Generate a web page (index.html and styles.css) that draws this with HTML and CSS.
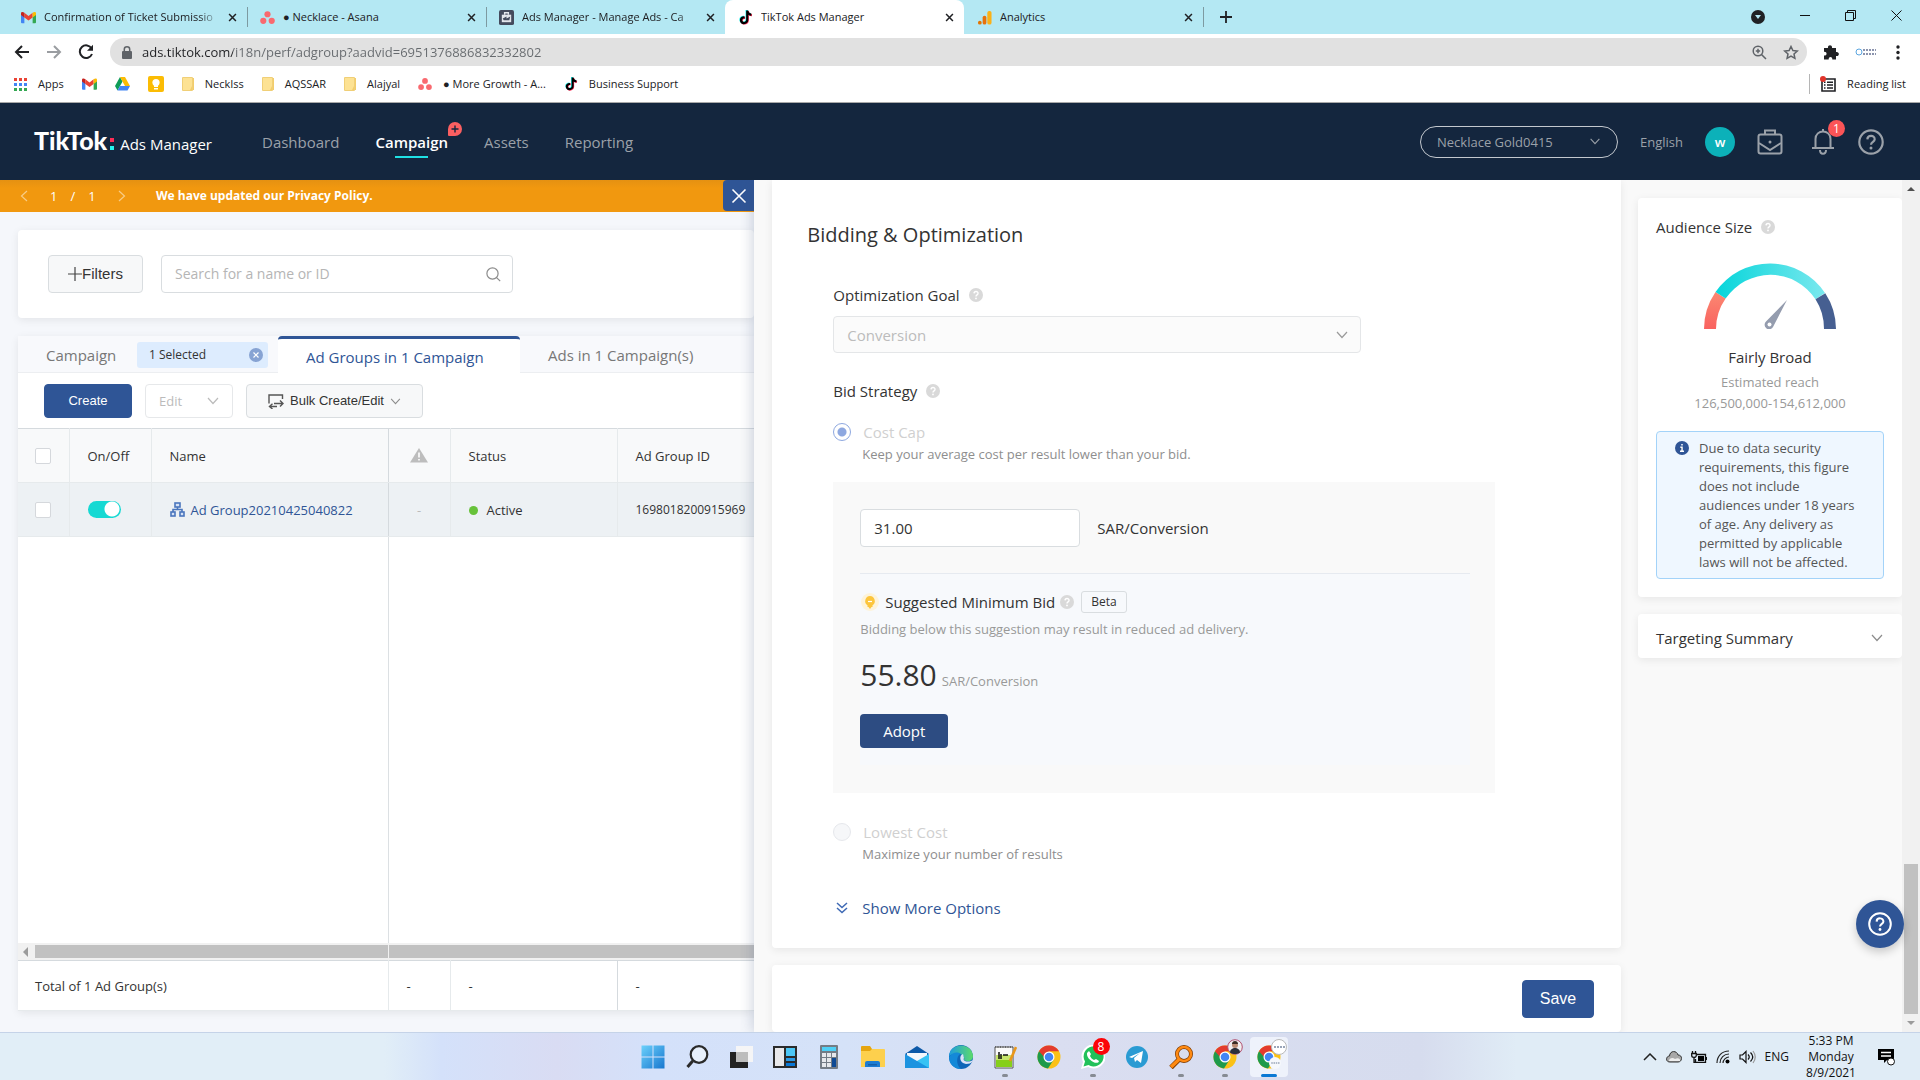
FILE: index.html
```html
<!DOCTYPE html>
<html lang="en">
<head>
  <meta charset="UTF-8">
  <title>TikTok Ads Manager</title>
  <meta name="viewport" content="width=device-width, initial-scale=1.0">
  <link rel="stylesheet" href="styles.css">
</head>
<body>
  <!-- shared icons -->
  <svg class="sprite" width="0" height="0" aria-hidden="true">
    <symbol id="i-gmail" viewBox="0 0 16 12"><path fill="#4285f4" d="M0 1.500V11a1 1 0 0 0 1 1h2.600V5z"/><path fill="#34a853" d="M16 1.500V11a1 1 0 0 1-1 1h-2.600V5z"/><path fill="#ea4335" d="M3.600 1 8 4.500 12.400 1v5L8 9.300 3.600 6z"/><path fill="#c5221f" d="M0 1.500C0 0 2 -.5 3.600 1v5L0 3.300z"/><path fill="#fbbc04" d="M16 1.500C16 0 14-.5 12.400 1v5L16 3.300z"/></symbol>
    <symbol id="i-asana" viewBox="0 0 16 16"><g fill="#f9696f"><circle cx="8" cy="4.500" r="3.300"/><circle cx="3.500" cy="11.500" r="3.300"/><circle cx="12.500" cy="11.500" r="3.300"/></g></symbol>
    <symbol id="i-tiktok" viewBox="0 0 16 16"><path fill="#25f4ee" d="M8 0h2.400c.3 2 1.400 3 3.300 3.300v2.200c-1.300 0-2.300-.4-3.300-1v5.700c0 5.600-8.800 6-9 .2C1.300 7.600 3.600 6 6.300 6.200v2.400C4.700 8.300 3.700 9.200 3.800 10.500c.2 2.400 4.200 2.200 4.200-.5z"/><path fill="#fe2c55" d="M9.400 1h2.300c.3 2 1.400 3 3.200 3.300v2.300c-1.300 0-2.300-.4-3.300-1v5.600c0 5.600-8.800 6-9 .2C2.600 8.600 5 7 7.600 7.300v2.300c-1.600-.3-2.600.6-2.500 1.900.2 2.400 4.300 2.200 4.300-.5z"/><path fill="#010101" d="M8.700.5H11c.3 2 1.400 3 3.200 3.300v2.300c-1.300 0-2.300-.4-3.200-1v5.600c0 5.600-8.800 6-9 .2C2 8.100 4.300 6.500 7 6.800v2.300c-1.600-.3-2.600.6-2.500 1.900.2 2.400 4.200 2.200 4.200-.5z"/></symbol>
    <symbol id="i-folder" viewBox="0 0 12 14"><path fill="#fde293" d="M0 1h11v12H0z"/><path fill="#f3cd6b" d="M11 1h1v12H8l2-4V1z"/><path fill="none" stroke="#f0cf77" d="M.5.5h10v13H.5z"/></symbol>
    <symbol id="i-close" viewBox="0 0 10 10"><path fill="none" stroke="currentColor" stroke-width="1.700" d="M1.200 1.200l7.600 7.600M8.800 1.200L1.200 8.800"/></symbol>
    <symbol id="i-down" viewBox="0 0 12 8"><path fill="none" stroke="currentColor" stroke-width="1.200" d="M1 1l5 5.500L11 1"/></symbol>
    <symbol id="i-help" viewBox="0 0 14 14"><circle cx="7" cy="7" r="7" fill="#d9d9d9"/><path fill="none" stroke="#fff" stroke-width="1.400" d="M5 5.400c.1-2.500 4.100-2.400 4 0 0 1.400-2 1.500-2 3"/><circle cx="7" cy="10.400" r=".9" fill="#fff"/></symbol>
    <symbol id="i-ask" viewBox="0 0 24 24"><g fill="none" stroke="currentColor" stroke-width="2"><circle cx="12" cy="12" r="10.800"/><path d="M8.600 9.600c.2-4.400 7-4.200 6.800 0-.1 2.300-3.400 2.300-3.400 5"/></g><circle cx="12" cy="17.500" r="1.400" fill="currentColor"/></symbol>
    <symbol id="i-chrome" viewBox="0 0 24 24"><circle cx="12" cy="12" r="11.500" fill="#fbc116"/><path fill="#e33b2e" d="M2 6.300A11.500 11.500 0 0 1 22 6.300H12L7 15z"/><path fill="#1e9a4b" d="M2 6.200A11.500 11.500 0 0 0 11 23.500l5.600-8.800L8 13z"/><circle cx="12" cy="12" r="5.500" fill="#fff"/><circle cx="12" cy="12" r="4.300" fill="#4285f4"/></symbol>
  </svg>

  <header class="browser">
    <div class="tabstrip">
      <div class="tab"><svg class="fav" aria-hidden="true"><use href="#i-gmail"/></svg><span class="tab-title fade">Confirmation of Ticket Submissio</span><button class="tab-x" aria-label="Close tab"><svg><use href="#i-close"/></svg></button></div>
      <div class="tab sep"><svg class="fav" aria-hidden="true"><use href="#i-asana"/></svg><span class="tab-title">● Necklace - Asana</span><button class="tab-x" aria-label="Close tab"><svg><use href="#i-close"/></svg></button></div>
      <div class="tab sep"><svg class="fav" viewBox="0 0 16 16" aria-hidden="true"><rect width="16" height="16" rx="2" fill="#444b5d"/><path fill="#e4e6ec" d="M3 5h10v8H3z"/><path fill="none" stroke="#e4e6ec" stroke-width="1.500" d="M6 5V3h4v2"/><path fill="#444b5d" d="M4 9l4-2v2l4-2-1 4H5z"/></svg><span class="tab-title fade">Ads Manager - Manage Ads - Ca</span><button class="tab-x" aria-label="Close tab"><svg><use href="#i-close"/></svg></button></div>
      <div class="tab active"><svg class="fav" aria-hidden="true"><use href="#i-tiktok"/></svg><span class="tab-title">TikTok Ads Manager</span><button class="tab-x" aria-label="Close tab"><svg><use href="#i-close"/></svg></button></div>
      <div class="tab"><svg class="fav" viewBox="0 0 16 16" aria-hidden="true"><circle cx="3" cy="13.500" r="2" fill="#e37400"/><rect x="6" y="6" width="4" height="9.500" rx="2" fill="#e8710a"/><rect x="11" y="1" width="4.500" height="14.500" rx="2" fill="#fbb117"/></svg><span class="tab-title">Analytics</span><button class="tab-x" aria-label="Close tab"><svg><use href="#i-close"/></svg></button></div>
      <button class="new-tab sep" aria-label="New tab"><svg viewBox="0 0 12 12"><path stroke="#202124" stroke-width="1.800" d="M6 0v12M0 6h12"/></svg></button>
      <div class="window-buttons">
        <button class="tab-search" aria-label="Tab search"><svg width="14" height="14" viewBox="0 0 14 14"><circle cx="7" cy="7" r="7" fill="#202124"/><path d="M4 5h6l-3 4z" fill="#b4e8f3"/></svg></button>
        <button aria-label="Minimize"><svg width="10" height="10" viewBox="0 0 10 10"><path stroke="#111" d="M0 5.500h10"/></svg></button>
        <button aria-label="Restore"><svg width="11" height="11" viewBox="0 0 11 11"><path fill="none" stroke="#111" d="M.5 2.500h8v8h-8zM2.500 2.500v-2h8v8h-2"/></svg></button>
        <button aria-label="Close window"><svg width="11" height="11" viewBox="0 0 11 11"><path stroke="#111" d="M.5.5l10 10M10.500.5l-10 10"/></svg></button>
      </div>
    </div>

    <div class="toolbar">
      <button aria-label="Back"><svg width="16" height="14" viewBox="0 0 16 14"><path fill="none" stroke="#202124" stroke-width="2" d="M15 7H2M8 1L2 7l6 6"/></svg></button>
      <button aria-label="Forward"><svg width="16" height="14" viewBox="0 0 16 14"><path fill="none" stroke="#9a9da1" stroke-width="2" d="M1 7h13M8 1l6 6-6 6"/></svg></button>
      <button aria-label="Reload"><svg width="16" height="16" viewBox="0 0 16 16"><path fill="none" stroke="#202124" stroke-width="2" d="M13.600 4.500A6.300 6.300 0 1 0 14 10"/><path fill="#202124" d="M15 .8v6H9z"/></svg></button>
      <div class="omnibox">
        <svg width="10" height="13" viewBox="0 0 10 13" aria-hidden="true"><rect y="5" width="10" height="8" rx="1" fill="#5f6368"/><path fill="none" stroke="#5f6368" stroke-width="1.500" d="M2.300 5V3.300c0-3.400 5.400-3.400 5.400 0V5"/></svg>
        <input class="url" type="text" aria-label="Address" value="ads.tiktok.com/i18n/perf/adgroup?aadvid=6951376886832332802">
        <svg width="15" height="15" viewBox="0 0 15 15" aria-hidden="true"><g fill="none" stroke="#5f6368" stroke-width="1.500"><circle cx="6" cy="6" r="4.800"/><path d="M9.500 9.500L14 14M6 3.800v4.400M3.800 6h4.400"/></g></svg>
        <svg width="16" height="15" viewBox="0 0 16 15" aria-hidden="true"><path fill="none" stroke="#5f6368" stroke-width="1.500" d="M8 1.500l1.900 4 4.400.5-3.300 3 .9 4.400L8 11.200l-3.900 2.200L5 9 1.700 6l4.400-.5z"/></svg>
      </div>
      <svg width="16" height="16" viewBox="0 0 16 16" aria-hidden="true"><path fill="#202124" d="M1 4h4C4.300.2 9.700.2 9 4h4v4c3.800-.7 3.800 4.700 0 4v3.500H9.300c.3-3.300-3.900-3.300-3.600 0H1v-4c3.400.4 3.400-4 0-3.600z"/></svg>
      <svg width="21" height="10" viewBox="0 0 21 10" aria-hidden="true"><circle cx="4" cy="5" r="3" fill="none" stroke="#5ba6e0"/><path stroke="#8b93ad" stroke-width="2" stroke-dasharray="2 1" d="M8 3h13M8 7h13"/></svg>
      <svg class="kebab" width="4" height="15" viewBox="0 0 4 15" aria-hidden="true"><g fill="#202124"><circle cx="2" cy="2" r="1.700"/><circle cx="2" cy="7.500" r="1.700"/><circle cx="2" cy="13" r="1.700"/></g></svg>
    </div>

    <nav class="bookmarks" aria-label="Bookmarks">
      <a href="#"><svg width="13" height="13" viewBox="0 0 13 13"><g stroke-width="3" stroke-dasharray="3 2"><path stroke="#ea4335" d="M0 1.500h13"/><path stroke="#4285f4" d="M0 6.500h13"/><path stroke="#34a853" d="M0 11.500h13"/></g></svg>Apps</a>
      <a href="#" aria-label="Gmail"><svg width="15" height="12"><use href="#i-gmail"/></svg></a>
      <a href="#" aria-label="Drive"><svg width="15" height="14" viewBox="0 0 15 14"><path fill="#0f9d58" d="M5 0L0 9l2.500 4.500L7.500 4.500z"/><path fill="#fbbc04" d="M5 0h5l5 9H10z"/><path fill="#4285f4" d="M5 9h10l-2.500 4.500h-10z"/></svg></a>
      <a href="#" aria-label="Keep"><svg width="16" height="16" viewBox="0 0 16 16"><rect width="16" height="16" rx="2" fill="#fbbc04"/><circle cx="8" cy="6.500" r="3.600" fill="#fff"/><path fill="#fff" d="M6 9h4v2H6zM6 12h4v1.500H6z"/></svg></a>
      <a href="#"><svg width="12" height="14"><use href="#i-folder"/></svg>NeckIss</a>
      <a href="#"><svg width="12" height="14"><use href="#i-folder"/></svg>AQSSAR</a>
      <a href="#"><svg width="12" height="14"><use href="#i-folder"/></svg>Alajyal</a>
      <a href="#"><svg width="14" height="14"><use href="#i-asana"/></svg>● More Growth - A...</a>
      <a href="#"><svg width="14" height="14"><use href="#i-tiktok"/></svg>Business Support</a>
      <a class="reading" href="#"><svg width="16" height="16" viewBox="0 0 16 16"><path fill="none" stroke="#202124" stroke-width="1.600" d="M2 3h13v12H2z"/><path stroke="#202124" stroke-width="1.400" d="M4 6.200h1.500M4 9h1.500M4 12h1.500M7 6.200h6M7 9h6M7 12h6"/><circle cx="3" cy="3" r="3" fill="#e0342b"/></svg>Reading list</a>
    </nav>
  </header>

  <header class="topnav">
    <a class="logo" href="#"><b>TikTok</b><span class="logo-dots"></span><span>Ads Manager</span></a>
    <nav class="menu" aria-label="Main">
      <a href="#">Dashboard</a>
      <a class="current" href="#">Campaign<svg class="plus-badge" width="14" height="14" viewBox="0 0 14 14" aria-hidden="true"><path fill="#fb5f61" d="M7 0a7 7 0 1 1 0 14H1a1 1 0 0 1-1-1V7a7 7 0 0 1 7-7z"/><path stroke="#14263e" stroke-width="1.400" d="M7 3.500v7M3.500 7h7"/></svg></a>
      <a href="#">Assets</a>
      <a href="#">Reporting</a>
    </nav>
    <div class="account">
      <div class="pick pill">
        <select aria-label="Account"><option>Necklace Gold0415</option></select>
        <svg width="12" height="7"><use href="#i-down"/></svg>
      </div>
      <a href="#">English</a>
      <span class="avatar">w</span>
      <button aria-label="Business center"><svg width="26" height="26" viewBox="0 0 26 26"><g fill="none" stroke="#9ba1a9" stroke-width="2"><rect x="1.500" y="5.500" width="23" height="19" rx="2"/><path d="M8 5V1.500h10V5M2 14l11 7 11-7"/></g><circle cx="13" cy="13" r="1.500" fill="#9ba1a9"/></svg></button>
      <button class="bell" aria-label="Notifications"><svg width="22" height="26" viewBox="0 0 22 26"><g fill="none" stroke="#9ba1a9" stroke-width="2"><path d="M3.500 18.500V10c0-10 15-10 15 0v8.500M0 19h22M8 21c0 5 6 5 6 0M11 0v3"/></g></svg><span class="count">1</span></button>
      <button aria-label="Help"><svg width="26" height="26"><use href="#i-ask"/></svg></button>
    </div>
  </header>

  <div class="page">
    <main class="left">
      <div class="notice">
        <button aria-label="Previous notice"><svg width="8" height="12" viewBox="0 0 8 12"><path fill="none" stroke="#f8cc86" stroke-width="1.200" d="M7 1L1.500 6 7 11"/></svg></button>
        <span class="pager"><span>1</span><span>/</span><span>1</span></span>
        <button aria-label="Next notice"><svg width="8" height="12" viewBox="0 0 8 12"><path fill="none" stroke="#f8cc86" stroke-width="1.200" d="M1 1l5.500 5L1 11"/></svg></button>
        <b>We have updated our Privacy Policy.</b>
        <button class="drawer-close" aria-label="Close panel"><svg width="16" height="16" viewBox="0 0 16 16"><path stroke="#fff" stroke-width="1.600" d="M1.500 1.500l13 13M14.500 1.500l-13 13"/></svg></button>
      </div>

      <section class="card filters">
        <button class="btn filter-btn"><svg width="14" height="14" viewBox="0 0 14 14"><path stroke="#444" stroke-width="1.200" d="M7 0v14M0 7h14"/></svg>Filters</button>
        <div class="search">
          <input type="text" aria-label="Search" placeholder="Search for a name or ID">
          <svg width="15" height="15" viewBox="0 0 15 15" aria-hidden="true"><g fill="none" stroke="#8c8c8c" stroke-width="1.200"><circle cx="6.500" cy="6.500" r="5.600"/><path d="M10.600 10.600l3.600 3.600"/></g></svg>
        </div>
      </section>

      <section class="card groups">
        <div class="levels">
          <div class="level first"><a href="#">Campaign</a><span class="chip">1 Selected<button aria-label="Clear selection"><svg viewBox="0 0 14 14" width="14" height="14"><circle cx="7" cy="7" r="7" fill="#87a3d3"/><path stroke="#fff" stroke-width="1.200" d="M4.500 4.500l5 5M9.500 4.500l-5 5"/></svg></button></span></div>
          <div class="level open"><a href="#">Ad Groups in 1 Campaign</a></div>
          <div class="level last"><a href="#">Ads in 1 Campaign(s)</a></div>
        </div>
        <div class="actions">
          <button class="btn primary create">Create</button>
          <button class="btn edit" disabled>Edit<svg width="14" height="8"><use href="#i-down"/></svg></button>
          <button class="btn bulk"><svg width="16" height="15" viewBox="0 0 16 15"><path fill="none" stroke="#555" stroke-width="1.400" d="M1 9.500V1h13.500v4M6 9.500h9M12 6.500l3 3-3 3M9 12.500H2M4.500 9.800l-3 2.700 3 2.500"/></svg>Bulk Create/Edit<svg width="11" height="7"><use href="#i-down"/></svg></button>
        </div>
        <table class="grid">
          <colgroup><col class="c-check"><col class="c-onoff"><col class="c-name"><col class="c-warn"><col class="c-status"><col></colgroup>
          <thead>
            <tr>
              <th><input class="check" type="checkbox" aria-label="Select all"></th>
              <th>On/Off</th>
              <th>Name</th>
              <th class="mid"><svg width="18" height="15" viewBox="0 0 18 15" role="img" aria-label="Warnings"><path fill="#bdbdbd" d="M9 0l9 14.500H0z" stroke-linejoin="round"/><path stroke="#fff" stroke-width="1.600" d="M9 4.500v5M9 11v1.600"/></svg></th>
              <th>Status</th>
              <th>Ad Group ID</th>
            </tr>
          </thead>
          <tbody>
            <tr>
              <td><input class="check" type="checkbox" aria-label="Select ad group"></td>
              <td><input class="switch" type="checkbox" aria-label="Ad group on or off" checked></td>
              <td><a class="group-link" href="#"><svg width="15" height="15" viewBox="0 0 15 15"><g fill="#d6e2f5" stroke="#4a76bd" stroke-width="1.600"><rect x="5" y="1" width="5" height="4"/><rect x="1" y="10" width="4" height="4"/><rect x="10" y="10" width="4" height="4"/></g><path fill="none" stroke="#4a76bd" stroke-width="1.600" d="M7.500 5v3M3 10V7.500h9V10"/></svg>Ad Group20210425040822</a></td>
              <td class="mid faint">-</td>
              <td><span class="dot"></span>Active</td>
              <td class="id">1698018200915969</td>
            </tr>
          </tbody>
        </table>
        <div class="rest"></div>
        <div class="hscroll"><svg width="6" height="10" viewBox="0 0 6 10" aria-hidden="true"><path fill="#9b9b9b" d="M5 0v10L0 5z"/></svg><div class="hthumb"></div></div>
        <table class="grid totals">
          <colgroup><col class="c-fixed"><col class="c-warn"><col class="c-status"><col></colgroup>
          <tbody><tr><td>Total of 1 Ad Group(s)</td><td>-</td><td>-</td><td>-</td></tr></tbody>
        </table>
      </section>
    </main>

    <div class="drawer">
      <div class="form">
        <section class="card bidding">
          <h2>Bidding &amp; Optimization</h2>
          <div class="field">
            <div class="label"><label for="goal">Optimization Goal</label><svg width="14" height="14"><use href="#i-help"/></svg></div>
            <div class="pick box">
              <select id="goal" disabled><option>Conversion</option></select>
              <svg width="14" height="8"><use href="#i-down"/></svg>
            </div>
            <div class="label strategy"><span>Bid Strategy</span><svg width="14" height="14"><use href="#i-help"/></svg></div>
            <div class="option"><input type="radio" name="strategy" id="cap" checked disabled><label for="cap">Cost Cap</label></div>
            <p class="hint">Keep your average cost per result lower than your bid.</p>
            <div class="bidbox">
              <div class="bid"><input type="text" id="bid" value="31.00"><label for="bid">SAR/Conversion</label></div>
              <div class="suggest">
                <div class="suggest-title"><svg width="20" height="20" viewBox="0 0 20 20" aria-hidden="true"><circle cx="10" cy="10" r="9" fill="#fdf3da"/><path fill="#fcc53c" d="M10 4a5 5 0 0 1 2.500 9.200V15h-1l-1.500 2-1.500-2h-1v-1.800A5 5 0 0 1 10 4z"/><path stroke="#fff" stroke-width="1.200" d="M8 9.500h4"/></svg>Suggested Minimum Bid<svg width="14" height="14"><use href="#i-help"/></svg><span class="beta">Beta</span></div>
                <p>Bidding below this suggestion may result in reduced ad delivery.</p>
                <div class="price"><strong>55.80</strong><span>SAR/Conversion</span></div>
                <button class="btn adopt">Adopt</button>
              </div>
            </div>
            <div class="option lowest"><input type="radio" name="strategy" id="low" disabled><label for="low">Lowest Cost</label></div>
            <p class="hint">Maximize your number of results</p>
            <a class="more" href="#"><svg width="12" height="12" viewBox="0 0 12 12"><path fill="none" stroke="#3f6ab5" stroke-width="1.500" d="M1 1l5 4.500L11 1M1 6l5 4.500L11 6"/></svg>Show More Options</a>
          </div>
        </section>
        <div class="card savebar"><button class="btn primary save">Save</button></div>
      </div>

      <aside class="side">
        <section class="card audience">
          <h3>Audience Size<svg width="14" height="14"><use href="#i-help"/></svg></h3>
          <svg class="gauge" width="132" height="66" viewBox="0 0 132 66" role="img" aria-label="Audience gauge">
            <defs>
              <linearGradient id="teal"><stop offset="0" stop-color="#05d5da"/><stop offset="1" stop-color="#7ae8ee"/></linearGradient>
              <linearGradient id="coral" x2="0" y2="1"><stop offset="0" stop-color="#fb8872"/><stop offset="1" stop-color="#f9625f"/></linearGradient>
            </defs>
            <path fill="url(#coral)" d="M0 66A66 66 0 0 1 11.500 29L21.600 35.600A54 54 0 0 0 12 66z"/>
            <path fill="url(#teal)" d="M11.500 29A66 66 0 0 1 121 30.100L111.500 36.300A54 54 0 0 0 21.600 35.600z"/>
            <path fill="#465f91" d="M121.300 30.300A66 66 0 0 1 132 66H120A54 54 0 0 0 111.500 36.300z"/>
            <path fill="#949cae" d="M83 37l-14 27a4.500 4.500 0 1 1-7-5.500z"/><circle cx="65.500" cy="61.500" r="2" fill="#fff"/>
          </svg>
          <p class="size">Fairly Broad</p>
          <p class="reach">Estimated reach</p>
          <p class="reach">126,500,000-154,612,000</p>
          <div class="info"><svg width="14" height="14" viewBox="0 0 14 14" aria-hidden="true"><circle cx="7" cy="7" r="7" fill="#2f5596"/><path stroke="#fff" stroke-width="1.500" d="M7 3v1.600M5.300 6.200H7V10M5 10.300h4"/></svg><p>Due to data security requirements, this figure does not include audiences under 18 years of age. Any delivery as permitted by applicable laws will not be affected.</p></div>
        </section>
        <button class="card targeting">Targeting Summary<svg width="14" height="8"><use href="#i-down"/></svg></button>
      </aside>
      <div class="vscroll" aria-hidden="true"><span class="up"></span><div class="vthumb"></div><span class="down"></span></div>
      <button class="float-help" aria-label="Get help"><svg width="24" height="24"><use href="#i-ask"/></svg></button>
    </div>
  </div>

  <footer class="taskbar">
    <div class="apps">
      <button aria-label="Start"><svg viewBox="0 0 24 24"><defs><linearGradient id="win" x2="1" y2="1"><stop offset="0" stop-color="#6bd0fb"/><stop offset="1" stop-color="#1877cf"/></linearGradient></defs><path fill="url(#win)" d="M.5.500H11.500v11H.5zM12.500.500h11v11h-11zM.5 12.500h11v11H.5zM12.500 12.500h11v11h-11z"/></svg></button>
      <button aria-label="Search"><svg viewBox="0 0 24 24"><g fill="none" stroke="#2a2a2a" stroke-width="2.200"><circle cx="14" cy="9.500" r="8.300" fill="#e8f0fb"/><path stroke-width="3" d="M7.700 16L2.500 22"/></g></svg></button>
      <button aria-label="Task view"><svg viewBox="0 0 24 24"><path fill="#232323" d="M1 7h18v16H1z"/><path fill="#f5f5f6" d="M7 1h17v16H7z"/><path fill="#bdbdbd" d="M7 7h12v10H7z"/></svg></button>
      <button aria-label="Widgets"><svg viewBox="0 0 24 24"><path fill="#2b2b2b" d="M0 1h24v22H0z"/><path fill="#e8e8ea" d="M2 3h9v18H2z"/><path fill="#4cc7f6" d="M13 3h9v8h-9z"/><path fill="#2b9be8" d="M13 13h9v3h-9z"/><path fill="#0a78d6" d="M13 18h9v3h-9z"/></svg></button>
      <button aria-label="Calculator"><svg viewBox="0 0 24 24"><rect x="3" width="18" height="24" rx="1" fill="#747c85"/><path fill="#4fd0f7" d="M5 2h14v4H5z"/><path fill="#e6e8eb" d="M5 8h4v4H5zM10 8h4v4h-4zM15 8h4v4h-4zM5 13h4v4H5zM10 13h4v4h-4zM5 18h4v4H5zM10 18h4v4h-4z"/><path fill="#0f4a94" d="M15 13h4v9h-4z"/></svg></button>
      <button aria-label="File Explorer"><svg viewBox="0 0 24 24"><path fill="#e6a50f" d="M0 2a1 1 0 0 1 1-1h8l2 3v3H0z"/><path fill="#fdd04d" d="M0 6h9l2-2h12a1 1 0 0 1 1 1v17H0z"/><path fill="#1c7cd3" d="M4 22v-4a2 2 0 0 1 2-2h11a2 2 0 0 1 2 2v4z"/><path fill="#155fa8" d="M7 19h9v1.500H7z"/></svg></button>
      <button aria-label="Mail"><svg viewBox="0 0 24 24"><path fill="#0c59a8" d="M0 9l12-8 12 8-12 8z"/><path fill="#f4f7fb" d="M2 8h20v4l-10 7L2 12z"/><path fill="#37c3f4" d="M24 9v14H0z"/><path fill="#1b93e0" d="M0 9l24 14H0z"/></svg></button>
      <button aria-label="Edge"><svg viewBox="0 0 24 24"><defs><linearGradient id="edge"><stop offset="0" stop-color="#1d9be0"/><stop offset="1" stop-color="#5ddb6a"/></linearGradient></defs><circle cx="12" cy="12" r="12" fill="#0f66b8"/><path fill="url(#edge)" d="M0 11C1-3 23-3 24 11c0 6-7 6-9 4 2-6-8-9-15-4z"/><path fill="#1489d8" d="M0 12c4-6 10-5 12-3-4 0-6 10 0 15C4 24 0 18 0 12z"/><path fill="#d9e3f5" d="M14 9c-4 1-4 9 3 10 3 0 5-1 6-2l1-2c-5 3-11 1-9-2z"/></svg></button>
      <button class="running" aria-label="Notepad++"><svg viewBox="0 0 24 24"><path fill="#fafafa" stroke="#555" d="M2 2h18v21H2z"/><path fill="#86cf1a" d="M3 14h16v8H3z"/><path fill="#c6e56a" d="M3 10h16v5H3z"/><path stroke="#666" stroke-width="2" stroke-dasharray="1 1.500" d="M2 2h18"/><path stroke="#111" stroke-width="1.500" d="M6 7v7M8 9v5M10 10h5"/><path stroke="#e9971c" stroke-width="2.600" d="M23 2l-6 14"/></svg></button>
      <button aria-label="Chrome"><svg><use href="#i-chrome"/></svg></button>
      <button class="running" aria-label="WhatsApp"><svg viewBox="0 0 24 24"><path fill="#fff" d="M0 24l2-7a12 12 0 1 1 5 5z"/><path fill="#22c15a" d="M2.500 21.500l1.500-5a10 10 0 1 1 3.500 3.500z"/><path fill="#fff" d="M8 6l2 3-1 2c1 2 2 3 4 4l2-1 3 2c-1 5-13-1-12-8z"/></svg><span class="count red">8</span></button>
      <button aria-label="Telegram"><svg viewBox="0 0 24 24"><circle cx="12" cy="12" r="11" fill="#2a9bd3"/><path fill="#fff" d="M4 12l14-6-2 12-4-3-2 2-1-4 6-5-8 5z"/></svg></button>
      <button class="running" aria-label="Everything"><svg viewBox="0 0 24 24"><g fill="none"><circle cx="15" cy="9" r="7" stroke="#7d3a00" stroke-width="4"/><path stroke="#7d3a00" stroke-width="5" d="M10.500 14L2 22.500"/><circle cx="15" cy="9" r="7" stroke="#ff8a12" stroke-width="2.600"/><path stroke="#ff8a12" stroke-width="3.400" d="M10.500 14L2 22"/></g></svg></button>
      <button class="running" aria-label="Chrome profile 1"><svg><use href="#i-chrome"/></svg><svg class="face" viewBox="0 0 16 16"><circle cx="8" cy="8" r="7.300" fill="#f1eef0" stroke="#b0506f"/><circle cx="8" cy="6" r="3" fill="#b98a72"/><path fill="#2c2f3a" d="M3 13.500c0-6 10-6 10 0-3 2-7 2-10 0z"/><path fill="#3a2a24" d="M5 5c0-4 6-4 6 0z"/></svg></button>
      <button class="running front" aria-label="Chrome profile 2"><svg><use href="#i-chrome"/></svg><svg class="face" viewBox="0 0 16 16"><circle cx="8" cy="8" r="7.500" fill="#fff" stroke="#b9b9b9"/><path stroke="#9aa5b8" stroke-width="2" stroke-dasharray="2 1" d="M3 8h11"/></svg><svg class="face low" viewBox="0 0 16 16"><circle cx="8" cy="8" r="8" fill="#f6f8fc"/><path stroke="#9aa5b8" stroke-width="2" stroke-dasharray="2 1" d="M3 8h11"/></svg></button>
    </div>
    <div class="tray">
      <svg width="14" height="8" viewBox="0 0 14 8"><path fill="none" stroke="#222" stroke-width="1.500" d="M1 7l6-6 6 6"/></svg>
      <svg width="16" height="12" viewBox="0 0 16 12"><path fill="#a8a8a8" stroke="#333" d="M4 11C-1 11 0 5 3.500 5 4-1 11-.5 12 4c5 0 4.500 7 0 7z"/><path fill="#eee" d="M3 10c0-3 4-4 6-2 3-2 6 0 5 2z"/></svg>
      <svg width="16" height="12" viewBox="0 0 16 12"><path fill="none" stroke="#111" stroke-width="1.300" d="M6 3.500h8.500v8H4.500V8M15.500 6v3M1.500 0v2M4.500 0v2M.7 2.500h4.600v2C5.300 7 .7 7 .7 4.500zM3 6v5.500h2"/><path d="M7 5h6v5H7z"/></svg>
      <svg width="14" height="14" viewBox="0 0 14 14"><g fill="none" stroke="#222" stroke-width="1.200"><path d="M1 13C1 6 6 1 13 1M4 13c0-5 4-9 9-9M7 13c0-3 3-6 6-6"/></g><circle cx="11.500" cy="11.500" r="2"/></svg>
      <svg width="17" height="14" viewBox="0 0 17 14"><g fill="none" stroke="#111" stroke-width="1.200"><path d="M1 5h2.500L7 1.500v11L3.500 9H1zM9 4.500c1.500 1.500 1.500 3.500 0 5M11.500 2.500c3 3 3 6 0 9"/><path stroke="#999" d="M14 1c3 4 3 8 0 12"/></g></svg>
      <span>ENG</span>
      <div class="clock">5:33 PM<br>Monday<br>8/9/2021</div>
      <svg class="bubble" width="18" height="18" viewBox="0 0 18 18"><path d="M1 1h16v11h-7l-3 3v-3H1z"/><path stroke="#fff" stroke-width="1.300" d="M4 4.500h10M4 8h10"/><circle cx="14" cy="13.500" r="3.500" fill="#fff" stroke="#111"/></svg>
    </div>
  </footer>
</body>
</html>
```
FILE: styles.css
```css
* {
  box-sizing: border-box;
}
body {
  display: flex;
  flex-direction: column;
  height: 100vh;
  margin: 0;
  overflow: hidden;
  font-family: "Open Sans", "Noto Sans", sans-serif;
  font-size: 13px;
  line-height: 20px;
  color: #333;
  background: #f5f7fb;
}
h2, h3, p {
  margin: 0;
  font-weight: normal;
}
a {
  color: inherit;
  text-decoration: none;
}
button, input, select {
  font: inherit;
  color: inherit;
}
button {
  padding: 0;
  border: none;
  background: none;
  cursor: pointer;
}
svg {
  display: block;
  flex: none;
}
.sprite {
  position: absolute;
}

/* browser window */
.browser {
  flex: none;
  background: #fff;
  border-bottom: 1px solid #a9a9a9;
  font-size: 11px;
  color: #202124;
}
.tabstrip {
  display: flex;
  height: 34px;
  padding-left: 8px;
  background: #b4e8f3;
}
.tab {
  display: flex;
  align-items: center;
  gap: 8px;
  flex: 0 1 239px;
  min-width: 0;
  padding: 0 10px 0 13px;
}
.tab.active {
  background: #fff;
  border-radius: 8px 8px 0 0;
}
.sep {
  background: linear-gradient(#7d9aa1, #7d9aa1) no-repeat left center / 1px 20px;
}
.fav {
  width: 15px;
  height: 15px;
}
.tab-title {
  flex: 1;
  overflow: hidden;
  white-space: nowrap;
}
.fade {
  -webkit-mask-image: linear-gradient(90deg, #000 88%, transparent);
  mask-image: linear-gradient(90deg, #000 88%, transparent);
}
.tab-x svg {
  width: 9px;
  height: 9px;
}
.new-tab {
  padding: 0 17px;
}
.new-tab svg {
  width: 12px;
  height: 12px;
}
.window-buttons {
  display: flex;
  align-items: center;
  gap: 35px;
  margin-left: auto;
  padding: 0 18px 4px 0;
}
.tab-search {
  padding-top: 4px;
}
.toolbar {
  display: flex;
  align-items: center;
  gap: 16px;
  height: 36px;
  padding: 0 20px 0 14px;
}
.omnibox {
  display: flex;
  align-items: center;
  gap: 16px;
  flex: 1;
  height: 28px;
  padding: 0 8px 0 12px;
  border-radius: 14px;
  background: #e1e1e1;
}
.url {
  flex: 1;
  min-width: 0;
  padding: 0;
  margin-left: -6px;
  border: none;
  outline: none;
  font-size: 13px;
  color: transparent;
  background: linear-gradient(90deg, #202124 91px, #666a6e 91px);
  -webkit-background-clip: text;
  background-clip: text;
}
.kebab {
  margin-left: 4px;
}
.bookmarks {
  display: flex;
  align-items: center;
  gap: 18px;
  height: 32px;
  padding: 0 14px 4px;
}
.bookmarks a {
  display: flex;
  align-items: center;
  gap: 11px;
}
.bookmarks .reading {
  margin-left: auto;
  padding-left: 10px;
  border-left: 1px solid #b5b5b5;
}

/* site navigation */
.topnav {
  display: flex;
  align-items: center;
  flex: none;
  height: 77px;
  padding: 0 36px 0 34px;
  background: #14263e;
  font-size: 15px;
  color: #9ba1a9;
}
.logo {
  display: flex;
  align-items: baseline;
  width: 228px;
  color: #fff;
}
.logo b {
  font-family: Lato, sans-serif;
  font-size: 25px;
  font-weight: 900;
}
.logo-dots {
  width: 4px;
  height: 12px;
  margin: 0 6px 0 3px;
  background: linear-gradient(#fe2c55 4px, transparent 4px 8px, #25f4ee 8px);
}
.menu {
  display: flex;
  gap: 36px;
}
.menu .current {
  position: relative;
  font-weight: 600;
  color: #fff;
}
.menu .current::after {
  content: "";
  position: absolute;
  left: 20px;
  top: 24px;
  width: 33px;
  height: 2px;
  background: #1fe0e4;
}
.plus-badge {
  position: absolute;
  left: 100%;
  top: -10px;
}
.account {
  display: flex;
  align-items: center;
  gap: 22px;
  margin-left: auto;
  font-size: 13px;
}
.pick {
  display: grid;
  align-items: center;
}
.pick > * {
  grid-area: 1 / 1;
}
.pick select {
  width: 100%;
  height: 100%;
  appearance: none;
  background: none;
  outline: none;
  opacity: 1;
}
.pick svg {
  justify-self: end;
  margin-right: 12px;
  pointer-events: none;
}
.pill {
  width: 198px;
  height: 32px;
}
.pill select {
  padding: 0 16px;
  border: 1px solid #c3c8ce;
  border-radius: 16px;
}
.pill svg {
  margin-right: 17px;
}
.avatar {
  width: 30px;
  height: 30px;
  border-radius: 50%;
  background: #0cb1b9;
  color: #fff;
  font-weight: 600;
  line-height: 30px;
  text-align: center;
}
.bell {
  position: relative;
  margin: 0 2px 0 7px;
}
.count {
  position: absolute;
  right: -11px;
  top: -9px;
  width: 17px;
  height: 17px;
  border-radius: 50%;
  background: #fb5457;
  color: #fff;
  font-size: 12px;
  line-height: 17px;
  text-align: center;
}

/* page */
.page {
  display: grid;
  grid-template-columns: minmax(0, 11fr) minmax(0, 17fr);
  flex: 1;
  min-height: 0;
}
.left {
  display: flex;
  flex-direction: column;
  min-height: 0;
  overflow: hidden;
}
.card {
  background: #fff;
  border-radius: 4px;
  box-shadow: 0 2px 8px rgba(0, 0, 0, 0.08);
}
.notice {
  display: flex;
  align-items: center;
  height: 32px;
  padding-left: 20px;
  background: linear-gradient(#e59112, #f1980f 8px);
  color: #fff;
}
.pager {
  display: flex;
  gap: 13px;
  width: 67px;
  margin: 0 1px 0 22px;
}
.notice b {
  margin-left: 30px;
  font-size: 12px;
  font-weight: 700;
}
.drawer-close {
  display: grid;
  place-items: center;
  align-self: start;
  width: 31px;
  height: 31px;
  margin-left: auto;
  border-radius: 4px 0 0 4px;
  background: #2f5596;
}
.btn {
  display: flex;
  align-items: center;
  justify-content: center;
  height: 34px;
  border: 1px solid #d9dde0;
  border-radius: 4px;
  background: #f7f8f9;
  font-family: "Liberation Sans", sans-serif;
}
.btn.primary {
  border-color: #2f5596;
  background: #2f5596;
  color: #fff;
}
.filters {
  display: flex;
  gap: 18px;
  margin: 18px 0 18px 18px;
  padding: 25px 30px;
}
.filter-btn {
  width: 95px;
  height: 38px;
  font-size: 15px;
}
.search {
  display: flex;
  align-items: center;
  width: 352px;
  padding: 0 11px 0 13px;
  border: 1px solid #d9dde0;
  border-radius: 4px;
}
.search input {
  flex: 1;
  min-width: 0;
  padding: 0;
  border: none;
  outline: none;
  font-size: 14px;
}
.search input::placeholder {
  color: #b5b5b5;
}
.groups {
  display: flex;
  flex-direction: column;
  flex: 1;
  margin: 0 0 21px 18px;
}
.levels {
  display: flex;
  height: 37px;
  font-size: 15px;
  color: #777;
}
.level {
  display: flex;
  align-items: center;
  padding: 2px 10px 0 28px;
  background: #f8f9fc;
  border-bottom: 1px solid #eceef1;
}
.level.first {
  justify-content: space-between;
  width: 260px;
}
.level.open {
  width: 242px;
  border-top: 3px solid #2f5596;
  border-bottom: none;
  border-radius: 4px 4px 0 0;
  background: #fff;
  color: #2f5596;
  font-weight: 500;
}
.level.last {
  flex: 1;
}
.chip {
  display: flex;
  align-items: center;
  justify-content: space-between;
  width: 131px;
  height: 26px;
  padding: 0 5px 0 12px;
  border-radius: 3px;
  background: #ddecfe;
  font-size: 12px;
  color: #333;
}
.actions {
  display: flex;
  gap: 13px;
  padding: 11px 26px 10px;
}
.create {
  width: 88px;
}
.edit {
  justify-content: space-between;
  width: 88px;
  padding: 0 12px 0 13px;
  background: #fff;
  border-color: #e6e8ea;
  font-family: inherit;
  color: #bbb;
}
.bulk {
  gap: 6px;
  width: 177px;
}
.grid {
  width: 100%;
  table-layout: fixed;
  border-collapse: collapse;
  border-top: 1px solid #d5dade;
}
.c-check { width: 51px; }
.c-onoff { width: 82px; }
.c-name { width: 237px; }
.c-warn { width: 62px; }
.c-status { width: 167px; }
.c-fixed { width: 370px; }
.grid th, .grid td {
  height: 54px;
  padding: 0 0 0 18px;
  border-right: 1px solid #e6eaec;
  border-bottom: 1px solid #e6eaec;
  white-space: nowrap;
  text-align: left;
  font-weight: normal;
}
.grid th:first-child, .grid td:first-child {
  padding-left: 17px;
}
.grid th {
  background: #f8f9fa;
  font-weight: 500;
}
.grid tbody td {
  background: #edf1f4;
}
.grid th:nth-child(3), .grid td:nth-child(3) {
  border-right-color: #d5dade;
}
.grid th:last-child, .grid td:last-child {
  border-right: none;
}
.grid .mid {
  padding: 0;
  text-align: center;
}
.grid .mid svg {
  margin: 0 auto;
}
.faint {
  color: #bbb;
}
.grid .id {
  font-size: 12px;
}
.check {
  display: block;
  width: 16px;
  height: 16px;
  margin: 0;
  appearance: none;
  border: 1px solid #d5d8dc;
  border-radius: 2px;
  background: #fff;
}
.switch {
  display: block;
  width: 33px;
  height: 17px;
  margin: 0;
  appearance: none;
  border-radius: 9px;
  background: radial-gradient(circle at 24px 8px, #fff 7px, #16d9d3 8px);
}
.group-link {
  display: flex;
  align-items: center;
  gap: 6px;
  color: #2f5596;
}
.dot {
  display: inline-block;
  width: 9px;
  height: 9px;
  margin-right: 9px;
  border-radius: 50%;
  background: #67c23a;
}
.rest {
  flex: 1;
  width: 371px;
  border-right: 1px solid #dce0e3;
}
.hscroll {
  display: flex;
  align-items: center;
  gap: 6px;
  height: 17px;
  padding: 2px 0 2px 5px;
  background: #f1f1f1;
}
.hthumb {
  flex: 1;
  height: 13px;
  background: linear-gradient(#f1f1f1, #f1f1f1) no-repeat 353px 0 / 1px 100% #c1c1c1;
}
.totals td {
  height: 50px;
}
.totals tbody td {
  background: #fff;
}

/* side drawer */
.drawer {
  position: relative;
  display: flex;
  min-height: 0;
  padding-left: 18px;
  background: #f9f9f9;
  box-shadow: 0 0 14px rgba(60, 80, 120, 0.3);
  clip-path: inset(0 0 0 -14px);
}
.form {
  flex: 1;
  display: flex;
  flex-direction: column;
  gap: 17px;
}
.bidding {
  padding: 40px 35px 30px;
  border-radius: 0 0 4px 4px;
}
h2 {
  font-size: 20px;
  font-weight: 500;
  line-height: 30px;
}
.field {
  width: 688px;
  max-width: 100%;
  padding: 35px 0 0 26px;
  font-size: 14px;
}
.label {
  display: flex;
  align-items: center;
  gap: 9px;
  font-size: 15px;
  font-weight: 500;
}
.box {
  width: 528px;
  height: 37px;
  margin: 11px 0 28px;
  color: #9a9a9a;
}
.box select {
  padding: 0 13px;
  border: 1px solid #e4e6e8;
  border-radius: 4px;
  background: #fbfbfb;
  font-size: 15px;
  color: #bcbcbc;
}
.option {
  display: flex;
  align-items: center;
  gap: 12px;
  height: 20px;
  margin-top: 21px;
  font-size: 15px;
  color: #d0d0d0;
}
.option input {
  width: 18px;
  height: 18px;
  margin: 0;
  appearance: none;
  border: 1px solid #e6e8ec;
  border-radius: 50%;
  background: #f6f7f9;
}
.option input:checked {
  border-color: #8ea8e0;
  background: radial-gradient(circle, #8ea8e0 4px, #fff 5px);
}
.hint {
  margin-top: 2px;
  padding-left: 29px;
  font-size: 13px;
  color: #8e8e8e;
}
.bidbox {
  margin-top: 18px;
  padding: 27px 25px 28px 27px;
  background: #f9f9f9;
}
.bid {
  display: flex;
  align-items: center;
  gap: 17px;
  padding-bottom: 26px;
  font-size: 15px;
}
.bid input {
  width: 220px;
  height: 38px;
  padding: 0 13px;
  border: 1px solid #d9dde0;
  border-radius: 4px;
  background: #fff;
  outline: none;
}
.suggest {
  padding: 17px 0;
  border-top: 1px solid #e6eaf0;
  background: #f7f9fc;
  font-size: 13px;
  color: #999;
}
.suggest-title {
  display: flex;
  align-items: center;
  gap: 5px;
  height: 22px;
  margin-bottom: 6px;
  font-size: 15px;
  color: #333;
}
.beta {
  margin-left: 2px;
  padding: 0 9px;
  border: 1px solid #d9dde0;
  border-radius: 3px;
  font-size: 12px;
}
.price {
  display: flex;
  align-items: baseline;
  gap: 5px;
  height: 40px;
  margin: 16px 0 19px;
  line-height: 40px;
}
.price strong {
  font-size: 30px;
  font-weight: normal;
  color: #333;
}
.adopt {
  width: 88px;
  border: none;
  background: #2d4c82;
  color: #fff;
  font-family: inherit;
  font-size: 15px;
}
.lowest {
  margin-top: 29px;
}
.more {
  display: flex;
  align-items: center;
  gap: 14px;
  margin: 34px 0 0 3px;
  font-size: 15px;
  color: #2f5596;
}
.savebar {
  display: flex;
  justify-content: flex-end;
  flex: 1;
  padding: 15px 27px 0;
}
.save {
  width: 72px;
  height: 38px;
  font-size: 16px;
}
.side {
  width: 264px;
  margin: 18px 0 0 17px;
}
.audience {
  padding: 19px 18px 18px;
}
h3 {
  display: flex;
  align-items: center;
  gap: 9px;
  font-size: 15px;
  font-weight: 500;
}
.gauge {
  margin: 26px auto 18px;
}
.size {
  margin-bottom: 5px;
  font-size: 15px;
  font-weight: 500;
  text-align: center;
}
.reach {
  line-height: 21px;
  color: #999;
  text-align: center;
}
.info {
  display: flex;
  gap: 10px;
  margin-top: 17px;
  padding: 7px 28px 6px 18px;
  border: 1px solid #a3d3f9;
  border-radius: 4px;
  background: #eff7ff;
  line-height: 19px;
  color: #555;
}
.info svg {
  margin-top: 2px;
}
.targeting {
  display: flex;
  align-items: center;
  justify-content: space-between;
  width: 100%;
  height: 44px;
  margin-top: 17px;
  padding: 4px 18px 0;
  font-size: 15px;
  font-weight: 500;
}
.targeting svg, .bulk svg:last-child {
  color: #8c8c8c;
}
.vscroll {
  display: flex;
  flex-direction: column;
  align-items: center;
  justify-content: flex-end;
  width: 18px;
  padding: 7px 2px;
  background: #f1f1f1;
}
.vthumb {
  width: 14px;
  height: 150px;
  margin-bottom: 7px;
  background: #c1c1c1;
}
.up, .down {
  border: 4px solid transparent;
}
.up {
  margin-bottom: auto;
  border-top: none;
  border-bottom-color: #505050;
}
.down {
  border-bottom: none;
  border-top-color: #9b9b9b;
}
.float-help {
  position: absolute;
  right: 16px;
  bottom: 84px;
  display: grid;
  place-items: center;
  width: 48px;
  height: 48px;
  border-radius: 50%;
  background: #2f5596;
  box-shadow: 0 4px 10px rgba(0, 0, 0, 0.2);
  color: #fff;
}

/* windows taskbar */
.taskbar {
  display: grid;
  grid-template-columns: 1fr auto 1fr;
  align-items: center;
  flex: none;
  height: 48px;
  border-top: 1px solid #c5d3e8;
  background: linear-gradient(90deg, #e1eef7 20%, #d4e1fa 23%, #d9dcf3 29%, #d4e1fa 34%, #d5e2f8 44%, #dadef1 55%, #d6dcee 74%, #e0ecf6 79%);
  font-size: 12px;
  color: #111;
}
.apps {
  display: flex;
  grid-column: 2;
  margin-right: 2px;
}
.apps button {
  position: relative;
  display: grid;
  place-items: center;
  width: 44px;
  height: 40px;
}
.apps svg {
  width: 24px;
  height: 24px;
}
.apps .running::after {
  content: "";
  position: absolute;
  bottom: 0;
  width: 6px;
  height: 3px;
  border-radius: 2px;
  background: #868b93;
}
.apps .front {
  width: 38px;
  margin-left: 3px;
  border-radius: 4px;
  background: #eef2fb;
}
.apps .front::after {
  width: 16px;
  background: #0a78d4;
}
.apps .face {
  position: absolute;
  right: 4px;
  top: 2px;
  width: 16px;
  height: 16px;
}
.apps .front .face {
  right: 1px;
}
.apps .front .low {
  right: 7px;
  top: 20px;
  width: 12px;
  height: 12px;
}
.count.red {
  right: 5px;
  top: 1px;
  background: #fb0407;
}
.tray {
  display: flex;
  align-items: center;
  justify-content: flex-end;
  gap: 9px;
  padding-right: 25px;
}
.clock {
  width: 66px;
  margin-right: 4px;
  line-height: 16px;
  text-align: center;
}
```
